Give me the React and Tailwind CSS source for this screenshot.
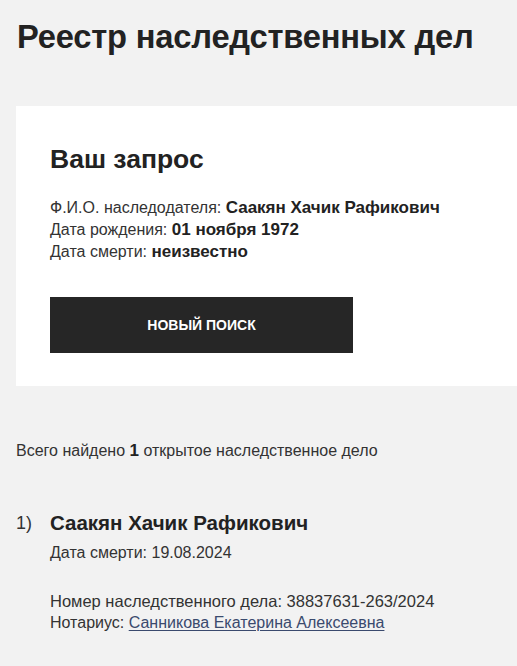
const font = { fontFamily: '"Liberation Sans", Arial, sans-serif' };

export default function App() {
  return (
    <div className="min-h-[666px] bg-[#f2f2f2] text-[#222222]" style={font}>
      <h1 className="px-[17px] pt-[17px] text-[32.7px] font-bold leading-[40px] tracking-[-0.2px]">
        Реестр наследственных дел
      </h1>

      <div className="ml-4 mt-[49px] h-[280px] bg-white pl-[34px] pt-[36px]">
        <h2 className="text-[26.5px] font-bold leading-[34px]">Ваш запрос</h2>
        <div className="mt-[21px] text-[16px] leading-[22px] text-[#333]">
          <p>
            Ф.И.О. наследодателя:{' '}
            <b className="text-[17px] font-bold text-[#222]">Саакян Хачик Рафикович</b>
          </p>
          <p>
            Дата рождения: <b className="text-[17px] font-bold text-[#222]">01 ноября 1972</b>
          </p>
          <p>
            Дата смерти: <b className="text-[17px] font-bold text-[#222]">неизвестно</b>
          </p>
        </div>
        <button className="mt-[34px] flex h-[56px] w-[303px] items-center justify-center bg-[#262626] text-[14px] font-bold uppercase text-white">
          Новый поиск
        </button>
      </div>

      <p className="px-4 pt-[54px] text-[16px] leading-[22px] text-[#333]">
        Всего найдено <b className="text-[17px] font-bold text-[#222]">1</b> открытое наследственное дело
      </p>

      <div className="mt-[48px] flex px-4">
        <span className="w-[34px] text-[18px] leading-[26px] text-[#333]">1)</span>
        <div>
          <p className="text-[20.5px] font-bold leading-[26px]">Саакян Хачик Рафикович</p>
          <p className="mt-[6px] text-[16px] leading-[22px] text-[#333]">Дата смерти: 19.08.2024</p>
          <p className="mt-[26px] text-[16.5px] leading-[22px] text-[#333]">
            Номер наследственного дела: 38837631-263/2024
          </p>
          <p className="text-[16px] leading-[22px] text-[#333]">
            Нотариус:{' '}
            <a href="#" className="text-[#3a4a6e] underline underline-offset-2">
              Санникова Екатерина Алексеевна
            </a>
          </p>
        </div>
      </div>
    </div>
  );
}
